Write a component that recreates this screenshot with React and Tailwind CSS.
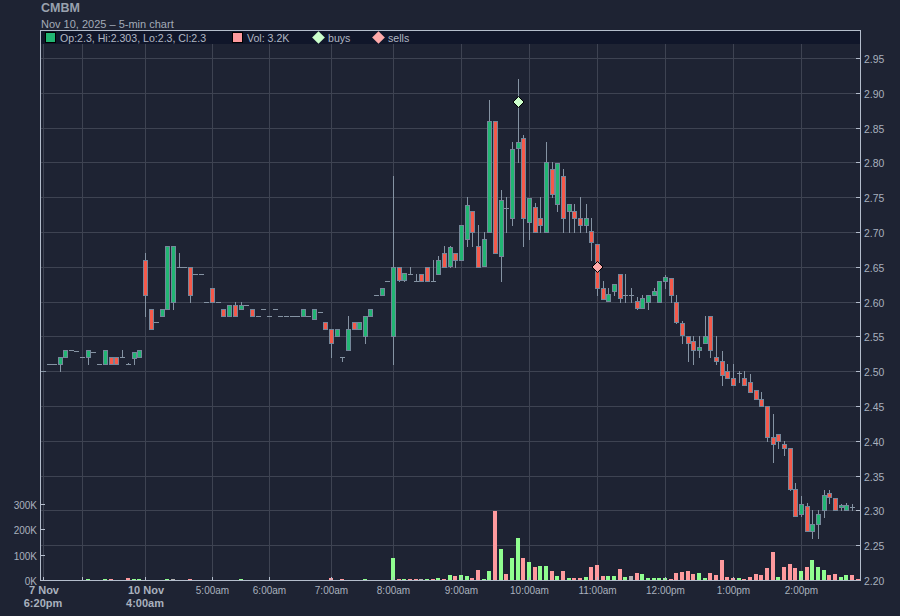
const hRows = [
  [58, '2.95'], [93, '2.90'], [128, '2.85'], [162, '2.80'], [197, '2.75'], [232, '2.70'], [267, '2.65'], [302, '2.60'],
  [336, '2.55'], [371, '2.50'], [406, '2.45'], [441, '2.40'], [476, '2.35'], [510, '2.30'], [545, '2.25'], [580, '2.20'],
]
const vCols = [43, 82, 145, 212, 269, 331, 393, 461, 529, 597, 665, 733, 801]
const timeLabels = [
  [212, '5:00am'], [269, '6:00am'], [331, '7:00am'], [393, '8:00am'], [461, '9:00am'], [529, '10:00am'],
  [597, '11:00am'], [665, '12:00pm'], [733, '1:00pm'], [801, '2:00pm'],
]
const volLabels = [[504, '300K'], [529, '200K'], [555, '100K'], [580, '0K']]

// bar index -> pixel column, the session gaps make the spacing uneven
const anchors = [[0, 43], [7, 82], [18, 145], [30, 212], [40, 269], [51, 331], [62, 393], [74, 461], [86, 529], [98, 597], [110, 665], [122, 733], [134, 801], [146, 869]]
const colOf = (i) => {
  for (let k = 0; k < anchors.length - 1; k++) {
    const [a, xa] = anchors[k]
    const [b, xb] = anchors[k + 1]
    if (i <= b) return Math.round(xa + ((i - a) * (xb - xa)) / (b - a))
  }
  return 0
}

const g = (top, bot, wt, wb) => ({ c: 'g', top, bot, wt, wb })
const r = (top, bot, wt, wb) => ({ c: 'r', top, bot, wt, wb })
const d = (y, wt, wb) => ({ c: 'd', top: y, bot: y, wt, wb })

const candles = [
  d(371), d(364), d(364), g(357, 365, 0, 372), g(350, 358), d(350), d(351), d(357), g(350, 358, 0, 365), d(352),
  d(364), g(350, 365), r(357, 365), r(357, 365), d(357, 350), d(364, 363), g(352, 359, 0, 365), g(350, 358), r(260, 296, 253, 317), r(309, 330),
  d(322), g(309, 317), g(246, 310), g(246, 303, 0, 310), d(267, 253), d(267), r(267, 296, 0, 303), d(274), d(274), d(302),
  r(288, 303), d(302), r(309, 317), g(305, 317), r(305, 317, 302), g(305, 310, 302), d(305), r(309, 317), d(316), d(309),
  d(316), d(309), d(316), d(316), d(316), d(316), g(309, 317), d(316), g(309, 320), d(312),
  r(322, 330), r(329, 344, 0, 358), g(329, 337), d(357, 0, 362), g(329, 351, 316), r(322, 330), g(322, 330), g(316, 337, 0, 344), g(309, 317), d(295),
  g(288, 296), d(281), g(267, 337, 176, 365), r(267, 281, 0, 282), g(273, 281, 0, 282), d(274, 267), d(281, 274), r(274, 282), r(267, 282), d(281, 260),
  g(260, 275, 256), r(253, 268, 246), g(247, 267, 246, 268), r(253, 261, 0, 268), g(225, 261), g(205, 240, 197, 247), r(211, 233, 0, 247), r(246, 268, 225), g(239, 267, 232), g(121, 233, 100),
  r(121, 254), g(200, 257, 190, 282), d(208, 197, 233), g(149, 219, 142, 226), g(142, 149, 79, 163), r(138, 219, 135, 247), g(198, 223, 0, 240), r(207, 233, 203), r(218, 226, 197, 233), g(162, 233, 142),
  r(169, 195, 162, 198), g(163, 205, 0, 212), r(176, 219, 169, 233), g(204, 212, 0, 233), r(211, 219, 204, 233), r(218, 226, 197, 233), g(218, 226, 204, 233), r(231, 243, 218, 261), r(244, 289, 0, 296), r(288, 300, 281),
  g(294, 302, 288), g(284, 292, 0, 296), r(274, 299, 0, 303), d(295, 274, 303), d(295, 288, 303), r(301, 309, 297, 310), g(298, 309, 295), g(295, 303, 0, 310), g(291, 296, 288), g(281, 303),
  g(277, 282, 275, 289), r(278, 296, 0, 303), r(302, 323, 295, 324), r(323, 336, 321, 344), r(336, 344, 0, 362), r(341, 351, 336, 365), g(347, 351, 336, 358), g(336, 344, 316), r(316, 351, 0, 358), r(357, 362, 336, 365),
  r(361, 376, 351, 386), r(371, 379, 364), r(378, 386, 364), d(373, 371, 383), r(378, 386, 371), r(382, 393, 374), r(390, 400), r(399, 407, 392), r(406, 438, 0, 442), r(437, 445, 414, 463),
  r(434, 442, 0, 449), r(444, 449, 441, 456), r(448, 490, 0, 491), r(489, 517, 483), g(504, 515, 496, 517), r(506, 532, 503), g(524, 532, 510, 539), g(514, 525, 510, 539), g(495, 511, 490, 518), r(493, 498, 490, 504),
  r(498, 511), { c: 'g', top: 505, bot: 508, wt: 504, wb: 511 }, g(505, 511, 503), d(507, 504, 511), d(510),
]

const volumes = {
  8: [1, 'g'], 11: [1, 'g'], 12: [1, 'p'], 15: [2, 'p'], 16: [1, 'g'], 17: [1, 'g'], 22: [1, 'g'], 23: [1, 'n'], 26: [1, 'p'], 35: [1, 'g'],
  51: [2, 'p'], 53: [1, 'p'], 57: [1, 'g'], 62: [22, 'g'], 63: [1, 'p'], 64: [1, 'g'], 65: [1, 'p'], 66: [1, 'p'], 67: [1, 'n'], 68: [1, 'g'], 69: [1, 'p'],
  70: [2, 'g'], 71: [1, 'p'], 72: [5, 'g'], 73: [4, 'p'], 74: [5, 'g'], 75: [4, 'g'], 76: [2, 'p'], 77: [10, 'p'], 78: [1, 'g'], 79: [9, 'g'],
  80: [69, 'p'], 81: [31, 'g'], 82: [6, 'p'], 83: [22, 'g'], 84: [42, 'g'], 85: [22, 'p'], 86: [18, 'g'], 87: [13, 'p'], 88: [14, 'g'], 89: [14, 'g'],
  90: [9, 'p'], 91: [4, 'g'], 92: [9, 'p'], 93: [2, 'g'], 94: [2, 'p'], 95: [2, 'p'], 96: [3, 'g'], 97: [13, 'p'], 98: [15, 'p'], 99: [4, 'p'],
  100: [4, 'g'], 101: [4, 'g'], 102: [11, 'p'], 103: [3, 'g'], 104: [4, 'n'], 105: [7, 'p'], 106: [6, 'g'], 107: [2, 'g'], 108: [2, 'g'], 109: [2, 'g'],
  110: [2, 'g'], 111: [1, 'p'], 112: [7, 'p'], 113: [8, 'p'], 114: [9, 'p'], 115: [6, 'p'], 116: [7, 'g'], 117: [2, 'g'], 118: [7, 'p'], 119: [5, 'p'],
  120: [20, 'p'], 121: [3, 'p'], 122: [2, 'p'], 123: [2, 'g'], 124: [1, 'p'], 125: [3, 'p'], 126: [6, 'p'], 127: [5, 'p'], 128: [12, 'p'], 129: [28, 'p'],
  130: [3, 'g'], 131: [13, 'p'], 132: [16, 'p'], 133: [12, 'p'], 134: [9, 'g'], 135: [13, 'p'], 136: [20, 'g'], 137: [13, 'g'], 138: [10, 'g'], 139: [5, 'p'],
  140: [6, 'p'], 141: [3, 'g'], 142: [5, 'g'], 143: [5, 'p'], 144: [1, 'p'],
}

const volClass = { g: 'fill-[#90fe90]', p: 'fill-[#fe9a9e]', n: 'fill-[#b4b4b4]' }

function Candle({ i, c, top, bot, wt, wb }) {
  const col = colOf(i)
  const x = col + 0.5
  return (
    <g>
      {wt > 0 && <line x1={x} x2={x} y1={wt} y2={top} className="stroke-[#8593a3]" />}
      {wb > 0 && <line x1={x} x2={x} y1={bot} y2={wb} className="stroke-[#8593a3]" />}
      {c === 'd' ? (
        <line x1={col - 2} x2={col + 3} y1={top + 0.5} y2={top + 0.5} className="stroke-[#8593a3]" />
      ) : (
        <rect
          x={col - 1.5}
          y={top + 0.5}
          width={4}
          height={bot - top - 1}
          className={`stroke-[#75879a] ${c === 'g' ? 'fill-[#22b573]' : 'fill-[#f5594a]'}`}
        />
      )}
    </g>
  )
}

function Chart() {
  return (
    <svg width="900" height="586" viewBox="0 30 900 586" shapeRendering="crispEdges" className="block font-['Liberation_Sans',Arial,sans-serif]">
      {/* grid */}
      {hRows.map(([y]) => (
        <line key={y} x1="41" x2="860" y1={y + 0.5} y2={y + 0.5} className="stroke-[#3e4352]" />
      ))}
      {vCols.map((x) => (
        <line key={x} x1={x + 0.5} x2={x + 0.5} y1="31" y2="580" className="stroke-[#3e4352]" />
      ))}

      {/* volume */}
      {Object.entries(volumes).map(([i, [h, c]]) => (
        <rect key={i} x={colOf(Number(i)) - 2} y={580 - h} width="4" height={h} className={volClass[c]} />
      ))}

      {/* candles */}
      {candles.map((c, i) => (
        <Candle key={i} i={i} {...c} />
      ))}

      {/* trades */}
      <polygon points="518.5,96.5 524,102 518.5,107.5 513,102" shapeRendering="auto" className="fill-[#ccffcc] stroke-black" />
      <polygon points="597.5,261.5 603,267 597.5,272.5 592,267" shapeRendering="auto" className="fill-[#ffaaaa] stroke-black" />

      {/* frame */}
      <rect x="40.5" y="30.5" width="820" height="550" className="fill-none stroke-[#b4bdcc]" />
      {hRows.map(([y]) => (
        <line key={y} x1="856" x2="860" y1={y + 0.5} y2={y + 0.5} className="stroke-[#b4bdcc]" />
      ))}
      {volLabels.map(([y]) => (
        <line key={y} x1="41" x2="45" y1={y + 0.5} y2={y + 0.5} className="stroke-[#b4bdcc]" />
      ))}
      {vCols.map((x) => (
        <line key={x} x1={x + 0.5} x2={x + 0.5} y1="577" y2="581" className="stroke-[#b4bdcc]" />
      ))}

      {/* axis labels */}
      <g shapeRendering="auto" className="fill-[#a9b1be] text-[10.4px]">
        {hRows.map(([y, label]) => (
          <text key={y} x="864" y={y + 4.5}>{label}</text>
        ))}
      </g>
      <g shapeRendering="auto" textAnchor="end" className="fill-[#a9b1be] text-[10px]">
        {volLabels.map(([y, label]) => (
          <text key={y} x="37" y={y + 4.5}>{label}</text>
        ))}
      </g>
      <g shapeRendering="auto" textAnchor="middle" className="fill-[#a9b1be] text-[10px]">
        {timeLabels.map(([x, label]) => (
          <text key={x} x={x + 0.5} y="594">{label}</text>
        ))}
      </g>
      <g shapeRendering="auto" textAnchor="middle" className="fill-[#a9b1be] text-[11px] font-bold">
        <text x="44" y="594">7 Nov</text>
        <text x="43" y="607">6:20pm</text>
        <text x="146" y="594">10 Nov</text>
        <text x="145" y="607">4:00am</text>
      </g>
    </svg>
  )
}

function Legend() {
  return (
    <div className="absolute left-[41px] top-[1px] flex h-[13px] w-[819px] items-center bg-[#10162a] text-[10.6px] leading-[13px] text-[#b0b7c3]">
      <span className="ml-1 h-[11px] w-[11px] border border-black bg-[#22b573]" />
      <span className="ml-1 w-[172px] pt-[1px]">Op:2.3, Hi:2.303, Lo:2.3, Cl:2.3</span>
      <span className="h-[11px] w-[11px] border border-black bg-[#fe9a9e]" />
      <span className="ml-1 w-[62px] pt-[1px]">Vol: 3.2K</span>
      <span className="ml-[5px] h-[9px] w-[9px] rotate-45 bg-[#ccffcc]" />
      <span className="ml-[5px] w-[46px] pt-[1px]">buys</span>
      <span className="h-[9px] w-[9px] rotate-45 bg-[#ffaaaa]" />
      <span className="ml-[5px] pt-[1px]">sells</span>
    </div>
  )
}

export default function App() {
  return (
    <div className="h-[616px] w-[900px] overflow-hidden bg-[#1e2333] font-['Liberation_Sans',Arial,sans-serif]">
      <div className="h-[30px] pl-[41px] pt-[1px]">
        <div className="text-[12.5px] font-bold leading-[15px] text-[#99a1ae]">CMBM</div>
        <div className="mt-[1px] text-[11px] leading-[14px] text-[#a3abb8]">Nov 10, 2025 – 5-min chart</div>
      </div>
      <div className="relative">
        <Chart />
        <Legend />
      </div>
    </div>
  )
}
